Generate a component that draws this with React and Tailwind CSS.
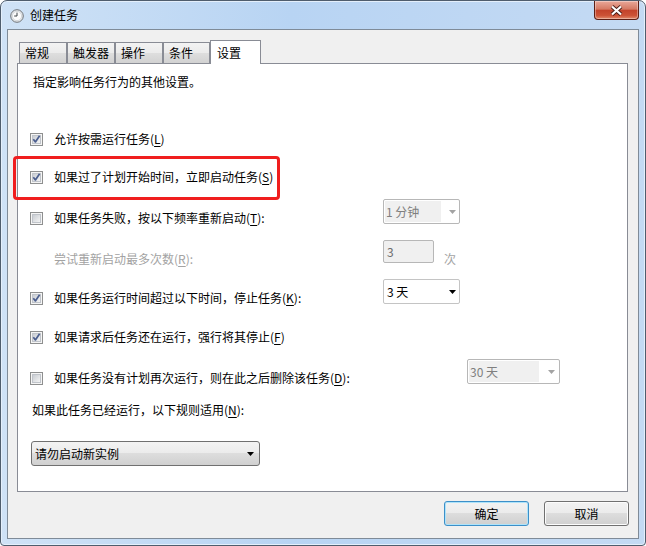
import React from "react";

const Acc = ({ k }) => (
  <>
    (<span className="underline underline-offset-[2px]">{k}</span>)
  </>
);

function CheckBox({ checked }) {
  return (
    <svg width="13" height="13" viewBox="0 0 13 13" className="shrink-0">
      <defs>
        <linearGradient id="cb-fill" x1="0" y1="0" x2="1" y2="1">
          <stop offset="0" stopColor="#c6cad0" />
          <stop offset="1" stopColor="#f7f7f7" />
        </linearGradient>
      </defs>
      <rect x="0.5" y="0.5" width="12" height="12" fill="#f5f5f5" stroke="#8e8f8f" />
      <rect x="2.5" y="2.5" width="8" height="8" fill="url(#cb-fill)" stroke="#c0c4ca" />
      {checked && (
        <path
          d="M3.3 6.3 L5.4 8.9 L9.6 2.7"
          fill="none"
          stroke="#4b5e8e"
          strokeWidth="1.7"
          strokeLinejoin="round"
        />
      )}
    </svg>
  );
}

const Arrow = ({ color }) => (
  <svg width="7" height="4" viewBox="0 0 7 4" className="shrink-0">
    <path d="M0 0H7L3.5 4Z" fill={color} />
  </svg>
);

const Tab = ({ className, children }) => (
  <div
    className={`${className} h-[21px] flex items-center pl-[5px] border border-b-0 border-[#898c95] bg-[linear-gradient(#f3f3f3_0%,#ebebeb_50%,#dedede_50%,#d2d2d2_100%)]`}
  >
    {children}
  </div>
);

export default function App() {
  return (
    <div className="w-[646px] h-[546px] flex flex-col border border-[#4f5d6d] rounded-t-[7px] rounded-b-[4px] bg-[linear-gradient(90deg,#cfe2f6,#b8d4f3_45%,#c4daf3)] shadow-[inset_0_0_0_1px_#e4effb] font-['Noto_Sans_CJK_SC',sans-serif] text-[12px] leading-[16px] text-black overflow-hidden">
      {/* title bar */}
      <div className="relative h-[28px] shrink-0 flex items-center">
        <svg width="14" height="14" viewBox="0 0 14 14" className="ml-[9px] mt-[2px]">
          <circle cx="7" cy="7" r="6.3" fill="#e6e9ec" stroke="#6f747a" strokeWidth="1" />
          <circle cx="7" cy="7" r="4.6" fill="#fbfbfb" stroke="#c3c7cc" strokeWidth="0.6" />
          <path d="M7 3.6V7H4.2" fill="none" stroke="#3d4247" strokeWidth="1" />
        </svg>
        <span className="ml-[6px]">创建任务</span>
        <div className="absolute top-0 right-[6px] w-[45px] h-[19px] flex items-center justify-center border border-t-0 border-[#5c1f15] rounded-b-[4px] bg-[linear-gradient(#e9a899_0%,#d57a64_45%,#c3432b_52%,#cc5236_80%,#e28b6c_100%)] shadow-[inset_0_0_0_1px_rgba(255,255,255,0.35)]">
          <svg width="13" height="11" viewBox="0 0 13 11">
            <path d="M2 1.5L11 9.5M11 1.5L2 9.5" stroke="#4a1f18" strokeWidth="4" />
            <path d="M2 1.5L11 9.5M11 1.5L2 9.5" stroke="#ffffff" strokeWidth="2.2" />
          </svg>
        </div>
      </div>

      {/* client area */}
      <div className="flex-1 mx-[6px] mb-[6px] border border-[#7f8b98] bg-[#f0f0f0] flex flex-col">
        {/* tabs */}
        <div className="h-[33px] shrink-0 flex items-end pl-[11px]">
          <Tab className="w-[48px]">常规</Tab>
          <Tab className="w-[48px]">触发器</Tab>
          <Tab className="w-[48px]">操作</Tab>
          <Tab className="w-[47px]">条件</Tab>
          <div className="relative z-10 w-[51px] h-[24px] -mb-px flex items-center pl-[6px] border border-b-0 border-[#898c95] bg-white">
            设置
          </div>
        </div>

        {/* panel */}
        <div className="relative w-[611px] h-[429px] ml-[9px] shrink-0 border border-[#898c95] bg-white flex flex-col">
          <div className="h-[36px] flex items-center pl-[15px]">指定影响任务行为的其他设置。</div>
          <div className="h-[20px]" />

          <div className="h-[38px] flex items-center pl-[12px] gap-[11px]">
            <CheckBox checked />
            <span>
              允许按需运行任务<Acc k="L" />
            </span>
          </div>

          <div className="h-[38px] flex items-center pl-[12px] gap-[11px]">
            <CheckBox checked />
            <span>
              如果过了计划开始时间，立即启动任务<Acc k="S" />
            </span>
          </div>

          <div className="h-[44px] flex items-start">
            <div className="w-[365px] h-full flex items-center pl-[12px] gap-[11px]">
              <CheckBox />
              <span>
                如果任务失败，按以下频率重新启动<Acc k="T" />:
              </span>
            </div>
            <div className="mt-[3px] w-[77px] h-[25px] flex items-center border border-[#b7b7b7] rounded-[2px] bg-white p-[1px]">
              <div className="w-[56px] h-full bg-[#f0f0f0] flex items-center pl-[1px] text-[#7f7f7f]">1 分钟</div>
              <div className="ml-auto mr-[2px]">
                <Arrow color="#a3a3a3" />
              </div>
            </div>
          </div>

          <div className="h-[38px] flex items-start">
            <div className="w-[365px] h-full flex items-center pl-[36px] text-[#a3a3a3]">
              <span>
                尝试重新启动最多次数<Acc k="R" />:
              </span>
            </div>
            <div className="w-[51px] h-[23px] flex items-center pl-[3px] border border-[#b7b7b7] rounded-[2px] bg-[#f0f0f0] text-[#6d6d6d]">
              3
            </div>
            <div className="h-full flex items-center ml-[10px] text-[#a3a3a3]">次</div>
          </div>

          <div className="h-[40px] flex items-start">
            <div className="w-[365px] h-full flex items-center pl-[12px] gap-[11px]">
              <CheckBox checked />
              <span>
                如果任务运行时间超过以下时间，停止任务<Acc k="K" />:
              </span>
            </div>
            <div className="mt-[1px] w-[77px] h-[25px] flex items-center pl-[3px] border border-[#c4c4c4] rounded-[2px] bg-white">
              <span>3 天</span>
              <div className="ml-auto mr-[3px]">
                <Arrow color="#000000" />
              </div>
            </div>
          </div>

          <div className="h-[38px] flex items-center pl-[12px] gap-[11px]">
            <CheckBox checked />
            <span>
              如果请求后任务还在运行，强行将其停止<Acc k="F" />
            </span>
          </div>

          <div className="h-[44px] flex items-start">
            <div className="w-[449px] h-full flex items-center pl-[12px] gap-[11px]">
              <CheckBox />
              <span>
                如果任务没有计划再次运行，则在此之后删除该任务<Acc k="D" />:
              </span>
            </div>
            <div className="mt-[3px] w-[93px] h-[25px] flex items-center border border-[#b7b7b7] rounded-[2px] bg-white p-[1px]">
              <div className="w-[70px] h-full bg-[#f0f0f0] flex items-center pl-[1px] text-[#7f7f7f]">30 天</div>
              <div className="ml-auto mr-[3px]">
                <Arrow color="#a3a3a3" />
              </div>
            </div>
          </div>

          <div className="h-[20px] flex items-center pl-[14px]">
            <span>
              如果此任务已经运行，以下规则适用<Acc k="N" />:
            </span>
          </div>

          <div className="mt-[21px] ml-[13px] w-[229px] h-[25px] flex items-center pl-[3px] border border-[#707070] rounded-[3px] bg-[linear-gradient(#f3f3f3_0%,#ebebeb_50%,#dddddd_50%,#d0d0d0_100%)]">
            <span>请勿启动新实例</span>
            <div className="ml-auto mr-[5px]">
              <Arrow color="#000000" />
            </div>
          </div>

          {/* red highlight */}
          <div className="absolute left-[-5px] top-[92px] w-[267px] h-[44px] border-[3px] border-[#f01e1e] rounded-[4px]" />
        </div>

        {/* buttons */}
        <div className="flex justify-end gap-[15px] pr-[9px] mt-[9px]">
          <button className="w-[85px] h-[25px] rounded-[3px] border border-[#3c8fc8] bg-[linear-gradient(#f2f2f2_0%,#ebebeb_50%,#dddddd_50%,#cfcfcf_100%)] shadow-[inset_0_0_0_1px_#aee3fa]">
            确定
          </button>
          <button className="w-[85px] h-[25px] rounded-[3px] border border-[#707070] bg-[linear-gradient(#f2f2f2_0%,#ebebeb_50%,#dddddd_50%,#cfcfcf_100%)] shadow-[inset_0_0_0_1px_#fcfcfc]">
            取消
          </button>
        </div>
      </div>
    </div>
  );
}
